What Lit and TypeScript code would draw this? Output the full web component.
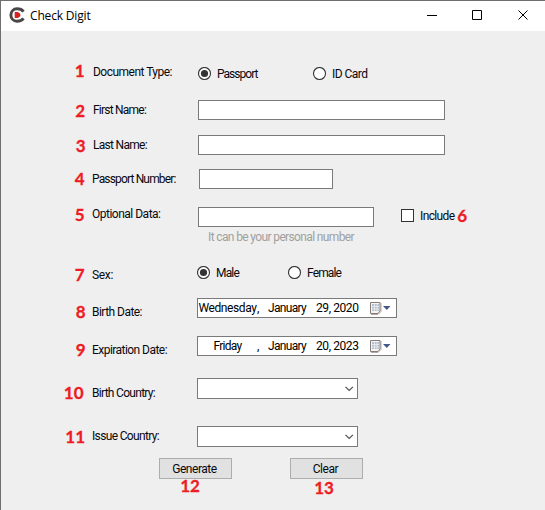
import { LitElement, html, css, svg, nothing } from "lit";
import { customElement, property } from "lit/decorators.js";

/** A run of text letter-spaced to fill a given width. */
@customElement("fit-text")
class FitText extends LitElement {
  @property() text = "";
  @property({ type: Number }) w = 0;
  static styles = css`
    :host { display: inline-block; white-space: pre; flex: none; }
    span { display: inline-block; }
  `;
  render() { return html`<span>${this.text}</span>`; }
  firstUpdated() {
    const s = this.renderRoot.querySelector("span") as HTMLElement;
    const natural = s.getBoundingClientRect().width;
    s.style.letterSpacing = (this.w - natural) / this.text.length + "px";
  }
}

const t = (text: string, w: number) => html`<fit-text .text=${text} .w=${w}></fit-text>`;

const radio = (text: string, w: number, on: boolean, cls = "") => html`
  <label class="choice ${cls}">
    <svg width="14" height="14" viewBox="0 0 14 14">
      <circle cx="6.5" cy="6.5" r="6" fill="#fff" stroke="#333" stroke-width="1.1" />
      ${on ? svg`<circle cx="6.5" cy="6.5" r="3.6" fill="#333" />` : nothing}
    </svg>
    <span class="txt">${t(text, w)}</span>
  </label>`;

const date = (day: string, dw: number, month: string, rest: string) => html`
  <div class="date">
    <span class="day">${t(day, dw)}</span><span class="comma">,</span>
    <span class="month">${t(month, 38)}</span><span class="rest">${t(rest, 42.5)}</span>
    <svg class="cal" width="24" height="16" viewBox="0 0 24 16">
      <path d="M2 13.500h7l3-3v-8.500" fill="none" stroke="#b5aaa8" />
      <path d="M1.500 1.500h9.500v8.500l-2 2.500h-7.500z" fill="#f6f3f1" stroke="#857b79" />
      <path d="M3 3h7v7H3z" fill="#b4bfce" />
      <path d="M3 5.500h7M3 8h7M5.500 3v7M8 3v7" stroke="#f4f6f8" stroke-width=".7" />
      <path d="M14 5h7.500l-3.750 4z" fill="#44598a" />
    </svg>
  </div>`;

const combo = html`<div class="combo">
  <svg width="10" height="6" viewBox="0 0 10 6"><path d="M1.500 .8l3.700 3.700 3.700-3.700" fill="none" stroke="#505050" stroke-width="1.200" /></svg>
</div>`;

interface Row { h: number; num: string; nt: number; nr: number; label: string; w: number; lt: number; x?: number; ct: number; control: unknown; }

const rows: Row[] = [
  { h: 38, num: "1", nt: 0, nr: 1.5, label: "Document Type:", w: 79, lt: 3, x: 1, ct: 5, control: html`${radio("Passport", 40.5, true, "one")}${radio("ID Card", 35.5, false, "one")}` },
  { h: 35, num: "2", nt: 2, nr: 1, label: "First Name:", w: 53, lt: 3, x: 1, ct: 0, control: html`<div class="input wide"></div>` },
  { h: 34, num: "3", nt: 2, nr: 0.5, label: "Last Name:", w: 54, lt: 3, x: 1, ct: 0, control: html`<div class="input wide"></div>` },
  { h: 37, num: "4", nt: 1, nr: 1.5, label: "Passport Number:", w: 83.5, lt: 3, ct: 0, control: html`<div class="input passport"></div>` },
  { h: 60, num: "5", nt: 0, nr: 1.5, label: "Optional Data:", w: 68.5, lt: 1, ct: 1, control: html`
      <div class="optional"><div class="input data"></div><div class="hint">${t("It can be your personal number", 146)}</div></div>
      <label class="check"><i class="box"></i><span class="txt">${t("Include", 34.5)}</span></label><b class="num six">6</b>` },
  { h: 32, num: "7", nt: 0, nr: 1.5, label: "Sex:", w: 21, lt: 2, ct: 0, control: html`${radio("Male", 23, true, "sex")}${radio("Female", 34, false, "sex")}` },
  { h: 38, num: "8", nt: 5, nr: 0.5, label: "Birth Date:", w: 50, lt: 7, ct: 0, control: date("Wednesday", 58, "January", "29, 2020") },
  { h: 42, num: "9", nt: 5, nr: 0.5, label: "Expiration Date:", w: 75, lt: 7, ct: 0, control: date("Friday", 28, "January", "20, 2023") },
  { h: 48, num: "10", nt: 6, nr: 2.5, label: "Birth Country:", w: 63, lt: 8, ct: 0, control: combo },
  { h: 32, num: "11", nt: 2, nr: 1, label: "Issue Country:", w: 67, lt: 3, ct: 0, control: combo },
];

@customElement("app-root")
class AppRoot extends LitElement {
  static styles = css`
    :host { display: block; width: 545px; height: 510px; box-sizing: border-box; overflow: hidden; background: #efefef;
      border-top: 1px solid #6f6f6f; border-left: 1px solid #707070; color: #08080f;
      font: 12px/14px Roboto, "Liberation Sans", Arial, sans-serif; }
    * { box-sizing: border-box; }
    svg { display: block; flex: none; }
    .bar { height: 30px; background: #fff; display: flex; align-items: flex-start; padding-left: 8px; color: #000; }
    .logo { margin-top: 6px; }
    .title { font: 12px/16px "Open Sans", "Noto Sans", sans-serif; margin: 7px 0 0 5px; }
    .win { margin: 9px 16px 0 auto; }
    .form { padding-top: 31px; }
    .row { display: flex; align-items: flex-start; }
    .num { width: 85px; text-align: right; font: 700 17px/18px Lato, "Open Sans", sans-serif; color: #ed1c24;
      -webkit-text-stroke: 0.3px #ed1c24; flex: none; }
    .label { width: 105px; margin-left: 6px; flex: none; }
    .control { display: flex; align-items: flex-start; }
    .input { height: 20px; background: #fff; border: 1px solid #7a7a7a; margin-left: 1px; }
    .wide { width: 247px; }
    .passport { width: 134px; margin-left: 2px; }
    .data { width: 176px; }
    .hint { color: #a0a0a0; margin: 3px 0 0 11px; }
    .optional { width: 204px; }
    .check { display: flex; width: 55px; }
    .box { width: 13px; height: 13px; margin: 2px 6px 0 0; background: #fff; border: 1px solid #333; }
    .check .txt { margin-top: 2px; }
    .six { width: 11px; }
    .choice { display: flex; width: 91px; }
    .choice .txt { margin-left: 5px; }
    .one { width: 115px; position: relative; left: 1px; }
    .date { display: flex; width: 200px; height: 20px; background: #fff; border: 1px solid #7a7a7a; color: #000; padding-top: 2px; }
    .day { width: 59px; text-align: center; margin-left: 0; }
    .comma { width: 11px; }
    .month { width: 48px; }
    .rest { width: 53px; }
    .cal { margin-top: 0; }
    .combo { display: flex; justify-content: flex-end; width: 161px; height: 21px; background: #fff; border: 1px solid #7a7a7a; padding: 7px 3px 0 0; }
    .actions { display: flex; padding-left: 158px; gap: 58px; }
    .action { width: 73px; text-align: center; }
    .btn { height: 21px; background: #e1e1e1; border: 1px solid #adadad; padding: 3px 2px 0 0; }
    .action .num { display: block; width: auto; text-align: center; }
    .n12 { margin: -2px 11px 0 0; }
    .n13 { margin: 0 5px 0 0; }
  `;
  render() {
    return html`
      <div class="bar">
        <svg class="logo" width="16" height="16" viewBox="0 0 16 16">
          <path d="M14.500 4.600C13 2.400 10.800 1.800 8 1.800C4.300 1.800 1.900 4.600 1.900 8S4.300 14.200 8 14.200C10.800 14.200 13 13.600 14.500 11.400" fill="none" stroke="#4a4646" stroke-width="2.900" />
          <path d="M5.700 5h3q2.800 .8 2.800 3t-2.800 3h-3z" fill="#d8201f" />
        </svg>
        <span class="title">${t("Check Digit", 60.5)}</span>
        <svg class="win" width="103" height="12" viewBox="0 0 103 12">
          <path d="M1 5.500h10" stroke="#000" />
          <path d="M46.500.5h9v9h-9z" fill="none" stroke="#000" />
          <path d="M92.500.5l9 9M101.500.5l-9 9" stroke="#000" />
        </svg>
      </div>
      <div class="form">
        ${rows.map((r) => html`<div class="row" style="height:${r.h}px">
          <b class="num" style="margin-top:${r.nt}px;padding-right:${r.nr}px">${r.num}</b>
          <span class="label" style="margin-top:${r.lt}px;padding-left:${r.x ?? 0}px">${t(r.label, r.w)}</span>
          <div class="control" style="margin-top:${r.ct}px">${r.control}</div>
        </div>`)}
        <div class="actions">
          <div class="action"><div class="btn">${t("Generate", 44.5)}</div><b class="num n12">12</b></div>
          <div class="action"><div class="btn">${t("Clear", 25.5)}</div><b class="num n13">13</b></div>
        </div>
      </div>`;
  }
}
